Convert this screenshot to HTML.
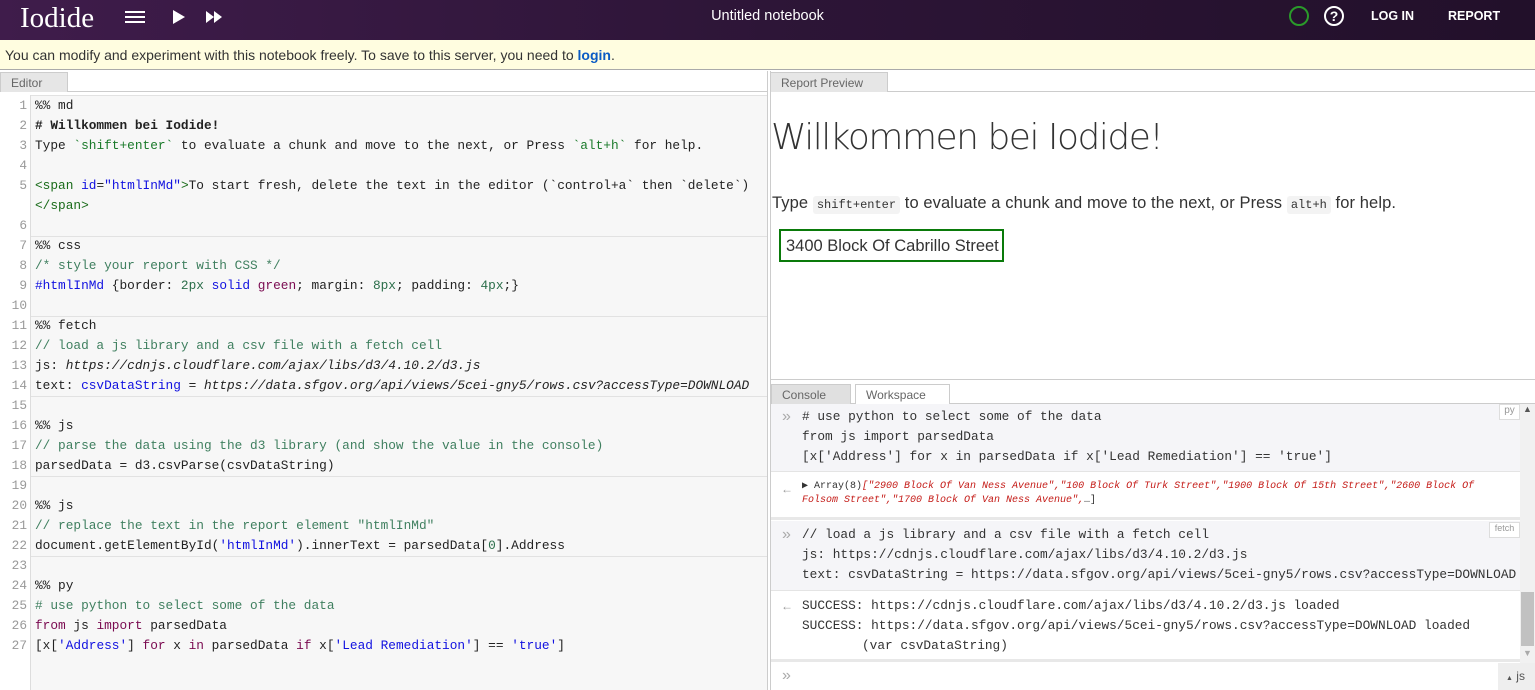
<!DOCTYPE html>
<html><head><meta charset="utf-8"><style>
*{box-sizing:border-box;margin:0;padding:0}
body{width:1535px;height:690px;overflow:hidden;background:#fff;font-family:"Liberation Sans",sans-serif;position:relative}
.hdr{position:absolute;left:0;top:0;width:1535px;height:40px;background:linear-gradient(90deg,#3f1c4b,#2d1537 50%,#22102a)}
.abs{position:absolute}
.mono{font-family:"Liberation Mono",monospace;font-size:12.8px;white-space:pre}
.ln{position:absolute;left:0;width:27px;text-align:right;color:#999;font-family:"Liberation Mono",monospace;font-size:12.8px}
.cl{position:absolute;left:35px;color:#222}
.c{color:#3f7f5f}.g{color:#1a7a2a}.b{color:#1010e0}.k{color:#7a0a50}.n{color:#2b6e4a}.t{color:#1a6b1a}
.tab{position:absolute;height:20px;font-size:12px;color:#666;padding:3px 0 0 10px;border:1px solid #ccc;border-bottom:none}
.sep{position:absolute;left:31px;width:736px;height:1px;background:#e2e2e2}
.con{position:absolute;color:#333}
</style></head><body>
<div class="hdr">
<div class="abs" style="left:20px;top:1px;font-family:'Liberation Serif',serif;font-size:29px;color:#fff;line-height:34px">Iodide</div>
<svg class="abs" style="left:125px;top:9px" width="20" height="16"><rect x="0" y="2" width="20" height="2" fill="#fff"/><rect x="0" y="7" width="20" height="2" fill="#fff"/><rect x="0" y="12" width="20" height="2" fill="#fff"/></svg>
<svg class="abs" style="left:172px;top:9px" width="14" height="16"><path d="M1 1 L13 8 L1 15Z" fill="#fff"/></svg>
<svg class="abs" style="left:205px;top:10px" width="18" height="14"><path d="M1 1 L9 7 L1 13Z M9 1 L17 7 L9 13Z" fill="#fff"/></svg>
<div class="abs" style="left:0;width:1535px;top:8px;text-align:center;color:#fff;font-size:14.5px">Untitled notebook</div>
<svg class="abs" style="left:1288px;top:5px" width="22" height="22"><circle cx="11" cy="11" r="9" fill="none" stroke="#2a9a2a" stroke-width="2"/></svg>
<svg class="abs" style="left:1323px;top:5px" width="22" height="22"><circle cx="11" cy="11" r="9" fill="none" stroke="#fff" stroke-width="2"/><text x="11" y="16" text-anchor="middle" fill="#fff" font-size="14" font-weight="bold" font-family="Liberation Sans">?</text></svg>
<div class="abs" style="left:1371px;top:9px;color:#fff;font-size:12.5px;font-weight:bold">LOG IN</div>
<div class="abs" style="left:1448px;top:9px;color:#fff;font-size:12.5px;font-weight:bold">REPORT</div>
</div>
<div class="abs" style="left:0;top:40px;width:1535px;height:30px;background:#fffde0;border-bottom:1px solid #aaa;font-size:14px;color:#333;padding:7px 0 0 5px">You can modify and experiment with this notebook freely. To save to this server, you need to <b style="color:#0a5bc4">login</b>.</div>

<!-- editor -->
<div class="abs" style="left:0;top:91px;width:767px;height:1px;background:#ccc"></div>
<div class="tab" style="left:0;top:72px;width:68px;background:#e6e6e6">Editor</div>
<div class="abs" style="left:767px;top:71px;width:1px;height:619px;background:#ccc"></div>
<div class="abs" style="left:30px;top:95px;width:737px;height:595px;background:#f7f7f7;border-left:1px solid #ddd"></div>
<div class="abs" style="left:31px;top:95px;width:736px;height:1px;background:#e2e2e2"></div>
<div class="sep" style="top:236px"></div><div class="sep" style="top:316px"></div><div class="sep" style="top:396px"></div><div class="sep" style="top:476px"></div><div class="sep" style="top:556px"></div>
<div style="position:absolute;left:0;top:96px;line-height:20px">
<div class="ln" style="top:0">1</div><div class="ln" style="top:20px">2</div><div class="ln" style="top:40px">3</div><div class="ln" style="top:60px">4</div><div class="ln" style="top:80px">5</div><div class="ln" style="top:120px">6</div><div class="ln" style="top:140px">7</div><div class="ln" style="top:160px">8</div><div class="ln" style="top:180px">9</div><div class="ln" style="top:200px">10</div><div class="ln" style="top:220px">11</div><div class="ln" style="top:240px">12</div><div class="ln" style="top:260px">13</div><div class="ln" style="top:280px">14</div><div class="ln" style="top:300px">15</div><div class="ln" style="top:320px">16</div><div class="ln" style="top:340px">17</div><div class="ln" style="top:360px">18</div><div class="ln" style="top:380px">19</div><div class="ln" style="top:400px">20</div><div class="ln" style="top:420px">21</div><div class="ln" style="top:440px">22</div><div class="ln" style="top:460px">23</div><div class="ln" style="top:480px">24</div><div class="ln" style="top:500px">25</div><div class="ln" style="top:520px">26</div><div class="ln" style="top:540px">27</div>
<div class="cl mono" style="top:0">%% md</div>
<div class="cl mono" style="top:20px;font-weight:bold"># Willkommen bei Iodide!</div>
<div class="cl mono" style="top:40px">Type <span class="g">`shift+enter`</span> to evaluate a chunk and move to the next, or Press <span class="g">`alt+h`</span> for help.</div>
<div class="cl mono" style="top:80px"><span class="t">&lt;span</span> <span class="b">id</span>=<span class="b">"htmlInMd"</span><span class="t">&gt;</span>To start fresh, delete the text in the editor (`control+a` then `delete`)</div>
<div class="cl mono t" style="top:100px">&lt;/span&gt;</div>
<div class="cl mono" style="top:140px">%% css</div>
<div class="cl mono c" style="top:160px">/* style your report with CSS */</div>
<div class="cl mono" style="top:180px"><span class="b">#htmlInMd</span> {border: <span class="n">2px</span> <span class="b">solid</span> <span class="k">green</span>; margin: <span class="n">8px</span>; padding: <span class="n">4px</span>;}</div>
<div class="cl mono" style="top:220px">%% fetch</div>
<div class="cl mono c" style="top:240px">// load a js library and a csv file with a fetch cell</div>
<div class="cl mono" style="top:260px">js: <i>https://cdnjs.cloudflare.com/ajax/libs/d3/4.10.2/d3.js</i></div>
<div class="cl mono" style="top:280px">text: <span class="b">csvDataString</span> = <i>https://data.sfgov.org/api/views/5cei-gny5/rows.csv?accessType=DOWNLOAD</i></div>
<div class="cl mono" style="top:320px">%% js</div>
<div class="cl mono c" style="top:340px">// parse the data using the d3 library (and show the value in the console)</div>
<div class="cl mono" style="top:360px">parsedData = d3.csvParse(csvDataString)</div>
<div class="cl mono" style="top:400px">%% js</div>
<div class="cl mono c" style="top:420px">// replace the text in the report element "htmlInMd"</div>
<div class="cl mono" style="top:440px">document.getElementById(<span class="b">'htmlInMd'</span>).innerText = parsedData[<span class="n">0</span>].Address</div>
<div class="cl mono" style="top:480px">%% py</div>
<div class="cl mono c" style="top:500px"># use python to select some of the data</div>
<div class="cl mono" style="top:520px"><span class="k">from</span> js <span class="k">import</span> parsedData</div>
<div class="cl mono" style="top:540px">[x[<span class="b">'Address'</span>] <span class="k">for</span> x <span class="k">in</span> parsedData <span class="k">if</span> x[<span class="b">'Lead Remediation'</span>] == <span class="b">'true'</span>]</div>
</div>

<!-- report -->
<div class="abs" style="left:770px;top:71px;width:1px;height:619px;background:#ccc"></div>
<div class="abs" style="left:770px;top:91px;width:765px;height:1px;background:#ccc"></div>
<div class="tab" style="left:770px;top:72px;width:118px;background:#e6e6e6">Report Preview</div>
<div class="abs" style="left:771px;top:117px;font-size:36px;color:#333;font-family:'DejaVu Sans','Liberation Sans',sans-serif;letter-spacing:-1.5px;font-weight:200">Willkommen bei Iodide!</div>
<div class="abs" style="left:772px;top:194px;font-size:16.5px;color:#333;letter-spacing:0.1px">Type <span class="mono" style="background:#f3f3f3;padding:2px 4px;font-size:12px;border-radius:3px;letter-spacing:0">shift+enter</span> to evaluate a chunk and move to the next, or Press <span class="mono" style="background:#f3f3f3;padding:2px 4px;font-size:12px;border-radius:3px;letter-spacing:0">alt+h</span> for help.</div>
<div class="abs" style="left:779px;top:229px;width:225px;height:33px;border:2px solid #0a7a0a;font-size:16.5px;color:#333;padding:6px 0 0 5px">3400 Block Of Cabrillo Street</div>

<!-- console -->
<div class="abs" style="left:770px;top:379px;width:765px;height:1px;background:#ccc"></div>
<div class="abs" style="left:770px;top:403px;width:765px;height:1px;background:#ccc"></div>
<div class="tab" style="left:771px;top:384px;width:80px;background:#e0e0e0">Console</div>
<div class="tab" style="left:855px;top:384px;width:95px;background:#fff">Workspace</div>
<div class="abs" style="left:771px;top:404px;width:749px;height:68px;background:#f5f5f8;border-bottom:1px solid #e4e4e4"></div>
<div class="abs" style="left:771px;top:473px;width:749px;height:47px;background:#fff;border-bottom:3px solid #e8e8e8"></div>
<div class="abs" style="left:771px;top:521px;width:749px;height:70px;background:#f5f5f8;border-bottom:1px solid #e4e4e4"></div>
<div class="abs" style="left:771px;top:592px;width:749px;height:70px;background:#fff;border-bottom:3px solid #e8e8e8"></div>
<div class="abs" style="left:1520px;top:404px;width:15px;height:259px;background:#f1f1f1"></div>
<div class="abs" style="left:1521px;top:592px;width:13px;height:54px;background:#c1c1c1"></div>
<div class="abs" style="left:1523px;top:404px;font-size:9px;color:#555">▲</div>
<div class="abs" style="left:1523px;top:648px;font-size:9px;color:#aaa">▼</div>
<div class="abs" style="left:1499px;top:404px;width:21px;height:16px;border:1px solid #ddd;background:#fff;font-size:10px;color:#999;text-align:center">py</div>
<div class="abs" style="left:1489px;top:522px;width:31px;height:16px;border:1px solid #ddd;background:#fff;font-size:9px;color:#999;text-align:center">fetch</div>
<div style="position:absolute;left:0;top:0;line-height:20px">
<div class="con" style="left:782px;top:407px;color:#aaa">»</div>
<div class="con mono" style="left:802px;top:407px"># use python to select some of the data</div>
<div class="con mono" style="left:802px;top:427px">from js import parsedData</div>
<div class="con mono" style="left:802px;top:447px">[x['Address'] for x in parsedData if x['Lead Remediation'] == 'true']</div>
<div class="con" style="left:781px;top:479px;color:#999;font-size:12px">←</div>
<div class="con mono" style="left:802px;top:480px;font-size:10px;line-height:14px;color:#333">▶ Array(8)<i style="color:#c41a16">["2900 Block Of Van Ness Avenue","100 Block Of Turk Street","1900 Block Of 15th Street","2600 Block Of</i></div>
<div class="con mono" style="left:802px;top:494px;font-size:10px;line-height:14px;color:#333"><i style="color:#c41a16">Folsom Street","1700 Block Of Van Ness Avenue",</i>…]</div>
<div class="con" style="left:782px;top:525px;color:#aaa">»</div>
<div class="con mono" style="left:802px;top:525px">// load a js library and a csv file with a fetch cell</div>
<div class="con mono" style="left:802px;top:545px">js: https://cdnjs.cloudflare.com/ajax/libs/d3/4.10.2/d3.js</div>
<div class="con mono" style="left:802px;top:565px">text: csvDataString = https://data.sfgov.org/api/views/5cei-gny5/rows.csv?accessType=DOWNLOAD</div>
<div class="con" style="left:781px;top:596px;color:#999;font-size:12px">←</div>
<div class="con mono" style="left:802px;top:596px">SUCCESS: https://cdnjs.cloudflare.com/ajax/libs/d3/4.10.2/d3.js loaded</div>
<div class="con mono" style="left:802px;top:616px">SUCCESS: https://data.sfgov.org/api/views/5cei-gny5/rows.csv?accessType=DOWNLOAD loaded</div>
<div class="con mono" style="left:862px;top:636px">(var csvDataString)</div>
<div class="con" style="left:782px;top:666px;color:#aaa">»</div>
</div>
<div class="abs" style="left:1498px;top:663px;width:37px;height:27px;background:#eee;font-size:12px;color:#555;padding:6px 0 0 8px"><span style="font-size:7px">▲</span> js</div>
</body></html>
